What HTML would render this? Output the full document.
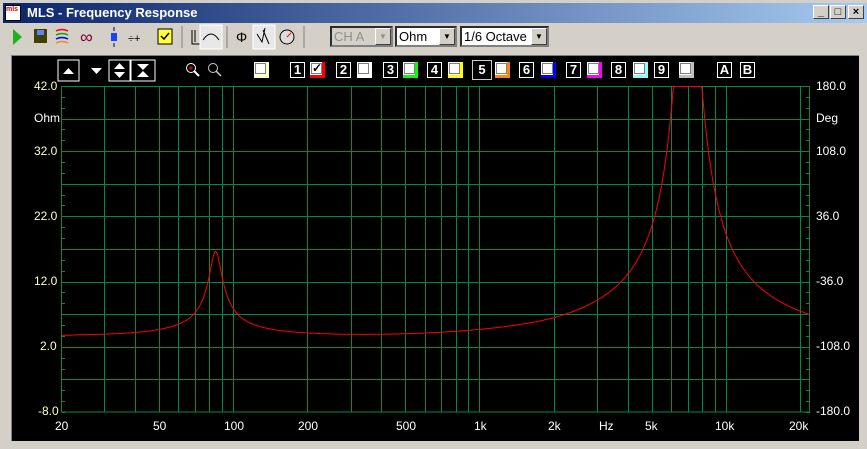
<!DOCTYPE html>
<html><head><meta charset="utf-8"><style>
*{margin:0;padding:0;box-sizing:border-box}
body{width:867px;height:449px;background:#d4d0c8;font-family:"Liberation Sans",sans-serif;position:relative;overflow:hidden}
.title{position:absolute;left:3px;top:3px;width:864px;height:20px;background:linear-gradient(90deg,#0a246a,#a6caf0);color:#fff;font-weight:bold;font-size:13px;line-height:20px;padding-left:24px}
.tb{position:absolute;top:5px;width:16px;height:14px;background:#d4d0c8;border:1px solid;border-color:#fff #404040 #404040 #fff;font-size:11px;line-height:12px;text-align:center;color:#000;font-weight:bold}
.dd{position:absolute;top:26px;height:21px;background:#fff;border:2px inset #808080;font-size:13px;line-height:17px;padding-left:2px}
.dd b{position:absolute;right:0;top:0;width:16px;height:17px;background:#d4d0c8;border:1px solid;border-color:#fff #404040 #404040 #fff;font-size:8px;text-align:center;line-height:15px;font-weight:normal}
.panel{position:absolute;left:11px;top:55px;width:848px;height:386px;background:#000;border-top:1px solid #808080;border-left:1px solid #808080}
.lab{position:absolute;color:#fff;font-size:12px}
.y{color:#ffffc0}
.nb{position:absolute;top:62px;width:15px;height:16px;border:1px solid #fff;color:#fff;font-size:13px;line-height:14px;text-align:center;font-weight:bold}
.cb{position:absolute;top:62px;width:15px;height:16px;background:#fff;border-right:3px solid;border-bottom:3px solid}
.cb i{position:absolute;left:1px;top:1px;width:11px;height:11px;border:1px solid #808080;background:#fff}
</style></head><body>
<div class="title">MLS - Frequency Response</div>
<div style="position:absolute;left:5px;top:5px;width:16px;height:16px;background:#fff;border:1px solid #000;font-size:7px;color:#c00;font-weight:bold;line-height:8px">mls</div>
<div class="tb" style="left:813px">_</div><div class="tb" style="left:830px">□</div><div class="tb" style="left:848px">×</div>

<svg style="position:absolute;left:0;top:24px" width="330" height="26">
<polygon points="13,5 13,21 22,13" fill="#20b020"/>
<rect x="34" y="5" width="13" height="14" fill="#404000"/><rect x="37" y="6" width="7" height="5" fill="#6080ff"/>
<g stroke-width="1.5" fill="none"><path d="M56,7 q6,-3 12,0" stroke="#f00"/><path d="M56,11 q6,-3 12,0" stroke="#0a0"/><path d="M56,15 q6,-3 12,0" stroke="#00f"/><path d="M56,19 q6,-3 12,0" stroke="#f80"/></g>
<text x="80" y="19" font-size="18" fill="#800040" font-family="Liberation Sans">∞</text>
<rect x="111" y="9" width="6" height="8" fill="#2040ff"/><path d="M114,3v4M114,19v4" stroke="#004"/>
<text x="128" y="18" font-size="11" fill="#000">÷+</text>
<rect x="158" y="5" width="14" height="15" fill="#ffff40" stroke="#000"/><path d="M161,12l3,3l5,-6" stroke="#000" fill="none" stroke-width="1.5"/>
<line x1="182" y1="2" x2="182" y2="24" stroke="#808080"/>
<path d="M192,6v14h15M195,6v12" stroke="#000" fill="none"/>
<rect x="200" y="1" width="22" height="24" fill="#e8e8e8" stroke="#fff"/>
<path d="M203,16q8,-12 16,0" stroke="#000" fill="none"/>
<line x1="227" y1="2" x2="227" y2="24" stroke="#808080"/>
<text x="236" y="18" font-size="14" fill="#000">Φ</text>
<rect x="253" y="1" width="22" height="24" fill="#e8e8e8" stroke="#fff"/>
<path d="M257,10l5,8l3,-14M263,6l6,14" stroke="#000" fill="none"/>
<circle cx="287" cy="13" r="7" fill="#ddd" stroke="#000"/><path d="M287,13l4,-4" stroke="#f00"/>
<line x1="304" y1="2" x2="304" y2="24" stroke="#808080"/>
</svg>
<div class="dd" style="left:330px;width:63px;color:#909090;background:#d4d0c8">CH A<b>▼</b></div>
<div class="dd" style="left:395px;width:62px">Ohm<b>▼</b></div>
<div class="dd" style="left:460px;width:89px">1/6 Octave<b>▼</b></div>

<div class="panel"></div>
<svg style="position:absolute;left:0;top:0" width="867" height="449">
<rect x="58" y="60" width="21" height="21" fill="none" stroke="#fff"/><polygon points="63,74 68.5,68 74,74" fill="#fff"/>
<polygon points="91,68 102,68 96.5,74" fill="#fff"/>
<rect x="109" y="60" width="21" height="21" fill="none" stroke="#fff"/><polygon points="114,69 119.5,63 125,69" fill="#fff"/><polygon points="114,72 125,72 119.5,78" fill="#fff"/>
<rect x="131" y="60" width="24" height="21" fill="none" stroke="#fff"/><polygon points="137,64 149,64 143,70" fill="#fff"/><polygon points="137,77 149,77 143,71" fill="#fff"/>
<circle cx="191" cy="68" r="4.5" fill="none" stroke="#fff"/><path d="M189,68h4M191,66v4" stroke="#f00"/><path d="M194,71l5,5" stroke="#fff" stroke-width="2"/>
<circle cx="213" cy="68" r="4.5" fill="none" stroke="#ccc"/><path d="M216,71l5,5" stroke="#ccc" stroke-width="1.5"/>
</svg>
<div class="cb" style="left:254px;border-color:#ffffc0"><i></i></div>
<div class="nb" style="left:290px">1</div><div class="cb" style="left:310px;border-color:#f00"><i></i><span style="position:absolute;left:2px;top:-1px;font-size:12px;font-weight:bold">✓</span></div>
<div class="nb" style="left:336px">2</div><div class="cb" style="left:357px;border-color:#fff"><i></i></div>
<div class="nb" style="left:383px">3</div><div class="cb" style="left:403px;border-color:#0f0"><i></i></div>
<div class="nb" style="left:427px">4</div><div class="cb" style="left:448px;border-color:#ff0"><i></i></div>
<div class="nb" style="left:472px;width:20px;height:20px;top:60px;border-color:#ccc;line-height:18px">5</div><div class="cb" style="left:495px;border-color:#f80"><i></i></div>
<div class="nb" style="left:519px">6</div><div class="cb" style="left:541px;border-color:#00f"><i></i></div>
<div class="nb" style="left:566px">7</div><div class="cb" style="left:587px;border-color:#f0f"><i></i></div>
<div class="nb" style="left:611px">8</div><div class="cb" style="left:633px;border-color:#8ff"><i></i></div>
<div class="nb" style="left:654px">9</div><div class="cb" style="left:679px;border-color:#c0c0c0"><i></i></div>
<div class="nb" style="left:717px">A</div><div class="nb" style="left:740px">B</div>

<svg id="plot" style="position:absolute;left:0;top:0" width="867" height="449"></svg>

<div class="lab y" style="left:34px;top:79px">42.0</div>
<div class="lab" style="left:34px;top:111px">Ohm</div>
<div class="lab y" style="left:34px;top:144px">32.0</div>
<div class="lab y" style="left:34px;top:209px">22.0</div>
<div class="lab y" style="left:34px;top:274px">12.0</div>
<div class="lab y" style="left:40px;top:339px">2.0</div>
<div class="lab y" style="left:38px;top:404px">-8.0</div>
<div class="lab" style="left:816px;top:79px">180.0</div>
<div class="lab" style="left:816px;top:111px">Deg</div>
<div class="lab" style="left:816px;top:144px">108.0</div>
<div class="lab" style="left:816px;top:209px">36.0</div>
<div class="lab" style="left:816px;top:274px">-36.0</div>
<div class="lab" style="left:816px;top:339px">-108.0</div>
<div class="lab" style="left:816px;top:404px">-180.0</div>
<div class="lab" style="left:55px;top:419px">20</div>
<div class="lab" style="left:153px;top:419px">50</div>
<div class="lab" style="left:224px;top:419px">100</div>
<div class="lab" style="left:298px;top:419px">200</div>
<div class="lab" style="left:396px;top:419px">500</div>
<div class="lab" style="left:474px;top:419px">1k</div>
<div class="lab" style="left:548px;top:419px">2k</div>
<div class="lab" style="left:599px;top:419px">Hz</div>
<div class="lab" style="left:645px;top:419px">5k</div>
<div class="lab" style="left:715px;top:419px">10k</div>
<div class="lab" style="left:789px;top:419px">20k</div>
<script>
var s=document.getElementById('plot'),h='';
function X(f){return 233+246.4*Math.log10(f/100);}
function Y(v){return 412-(v+8)*6.52;}
var g='#008a48';
h+='<rect x="61.5" y="86.5" width="748" height="325.5" fill="none" stroke="'+g+'"/>';
for(var d=10;d<=10000;d*=10)for(var m=1;m<=9;m++){var f=d*m;if(f<20||f>20000)continue;var x=Math.round(X(f))+.5;h+='<line x1="'+x+'" y1="86" x2="'+x+'" y2="412" stroke="'+g+'"/>';}
for(var v=-3;v<42;v+=5){var y=Math.round(Y(v))+.5;h+='<line x1="62" y1="'+y+'" x2="810" y2="'+y+'" stroke="'+g+'"/>';}
for(var v=-8;v<=42;v+=1.667){var y=Math.round(Y(v))+.5;h+='<line x1="62" y1="'+y+'" x2="65" y2="'+y+'" stroke="'+g+'"/><line x1="806" y1="'+y+'" x2="810" y2="'+y+'" stroke="'+g+'"/>';}
var p='';
for(var x=62;x<=810;x+=1){var f=100*Math.pow(10,(x-233)/246.4);
var a=f/85-85/f,b=f/7000-7000/f;
var z=2.9+0.4*Math.min(1,20/f*1.2)+13.5/Math.sqrt(1+66*a*a)+70/Math.sqrt(1+30*b*b)-0.5*Math.min(1,f/2000);
var y=Math.max(86.5,Y(z));p+=(p?'L':'M')+x+','+y.toFixed(1);}
h+='<path d="'+p+'" fill="none" stroke="#f00"/>';
s.innerHTML=h;
</script>
</body></html>
